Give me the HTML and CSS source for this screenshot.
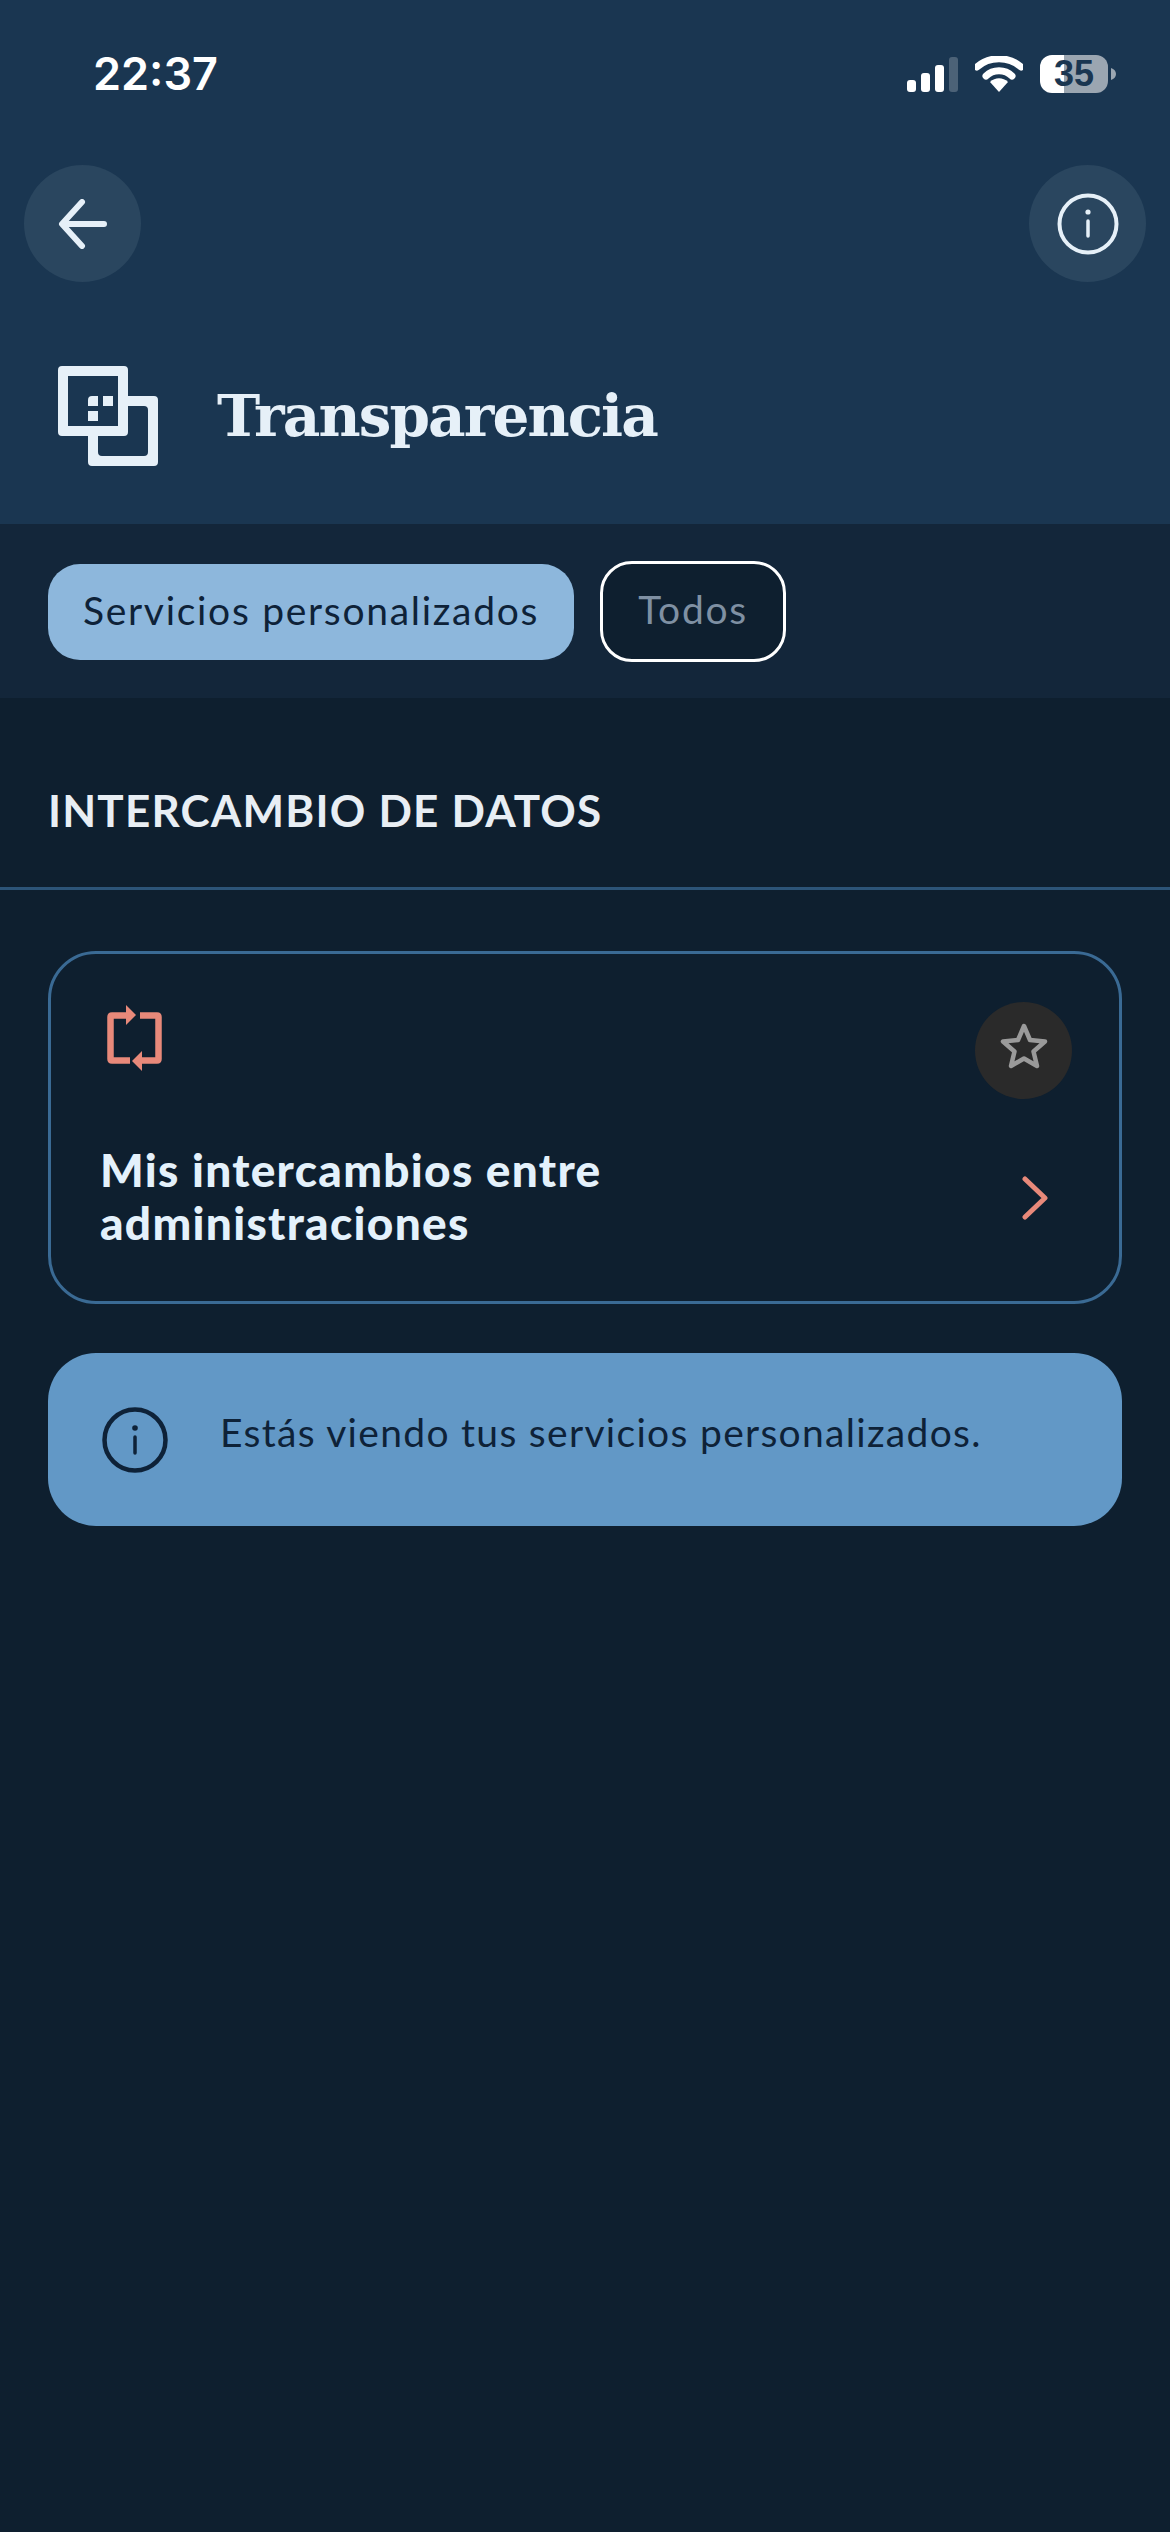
FILE: index.html
```html
<!DOCTYPE html>
<html lang="es">
<head>
    <meta charset="UTF-8">
    <title>Transparencia</title>
    <link rel="stylesheet" href="styles.css">
</head>
<body>
<div class="app">
    <header class="header">
        <div class="status-bar">
            <span class="time">22:37</span>
            <div class="status-icons">
                <svg class="signal" width="51" height="35" viewBox="0 0 51 35">
                    <rect x="0" y="23" width="9" height="12" rx="3" fill="#fff"/>
                    <rect x="14" y="16" width="9" height="19" rx="3" fill="#fff"/>
                    <rect x="28" y="8" width="9" height="27" rx="3" fill="#fff"/>
                    <rect x="42" y="0" width="9" height="35" rx="3" fill="#fff" fill-opacity="0.22"/>
                </svg>
                <svg class="wifi" width="48" height="36" viewBox="0 0 48 36">
                    <path d="M2 11 C14 0 34 0 46 11" fill="none" stroke="#fff" stroke-width="7" stroke-linecap="round"/>
                    <path d="M11 20 C18 13 30 13 37 20" fill="none" stroke="#fff" stroke-width="7" stroke-linecap="round"/>
                    <path d="M15 26 C20 21 28 21 33 26 L24 36 Z" fill="#fff"/>
                </svg>
                <div class="battery"><span class="battery-level">35</span></div>
                <svg class="battery-tip" width="5" height="12" viewBox="0 0 5 12">
                    <path d="M0 0 C3 1 5 3 5 6 C5 9 3 11 0 12 Z" fill="#9ba6b1"/>
                </svg>
            </div>
        </div>
        <nav class="nav">
            <button class="round-btn">
                <svg width="50" height="50" viewBox="0 0 50 50">
                    <path d="M46 25 H5 M24 3 L4 25 L24 47" fill="none" stroke="#e6f0f8" stroke-width="6" stroke-linecap="round" stroke-linejoin="round"/>
                </svg>
            </button>
            <button class="round-btn">
                <svg width="62" height="62" viewBox="0 0 62 62">
                    <circle cx="31" cy="31" r="28.5" fill="none" stroke="#e6f0f8" stroke-width="4"/>
                    <circle cx="31" cy="19" r="2.6" fill="#e6f0f8"/>
                    <path d="M31 28 V43" stroke="#e6f0f8" stroke-width="3.5" stroke-linecap="round"/>
                </svg>
            </button>
        </nav>
        <div class="title-row">
            <svg class="title-icon" width="100" height="100" viewBox="0 0 100 100">
                <path fill="#e6f0f8" fill-rule="evenodd" d="M34 30 H96 Q100 30 100 34 V96 Q100 100 96 100 H34 Q30 100 30 96 V70 H40 V86 Q40 90 44 90 H86 Q90 90 90 86 V44 Q90 40 86 40 H70 V30 Z"/>
                <path fill="#e6f0f8" fill-rule="evenodd" d="M4 0 H66 Q70 0 70 4 V66 Q70 70 66 70 H4 Q0 70 0 66 V4 Q0 0 4 0 Z M10 10 V60 H60 V10 Z"/>
                <path fill="#e6f0f8" d="M34 30 H40 V40 H30 V34 Q30 30 34 30 Z M45 30 H55 V40 H45 Z M30 45 H40 V55 H30 Z"/>
            </svg>
            <h1 class="title">Transparencia</h1>
        </div>
    </header>

    <div class="tabs">
        <button class="tab tab-active">Servicios personalizados</button>
        <button class="tab tab-outline">Todos</button>
    </div>

    <h2 class="section-title">INTERCAMBIO DE DATOS</h2>

    <main class="content">
        <section class="card">
            <div class="card-top">
                <svg class="exchange-icon" width="55" height="66" viewBox="0 0 55 66">
                    <path d="M20 10.500 H5 Q3.500 10.500 3.500 12 V54 Q3.500 55.500 5 55.500 H23" fill="none" stroke="#e8897a" stroke-width="6.500"/>
                    <path d="M33 10.500 H50 Q51.500 10.500 51.500 12 V54 Q51.500 55.500 50 55.500 H34" fill="none" stroke="#e8897a" stroke-width="6.500"/>
                    <path d="M19 0 L29 10 L19 20 Z" fill="#e8897a"/>
                    <path d="M35 46 L25 56 L35 66 Z" fill="#e8897a"/>
                </svg>
                <button class="star-btn">
                    <svg width="48" height="46" viewBox="0 0 48 46">
                        <path d="M24 3 L30 17 L45 18.500 L33.500 28.500 L37 43 L24 35.500 L11 43 L14.500 28.500 L3 18.500 L18 17 Z" fill="none" stroke="#9a9a9a" stroke-width="4.500" stroke-linejoin="round"/>
                    </svg>
                </button>
            </div>
            <div class="card-bottom">
                <h3 class="card-title">Mis intercambios entre<br>administraciones</h3>
                <svg class="chevron" width="26" height="44" viewBox="0 0 26 44">
                    <path d="M3 3 L23 22 L3 41" fill="none" stroke="#e8897a" stroke-width="5" stroke-linecap="round" stroke-linejoin="round"/>
                </svg>
            </div>
        </section>

        <section class="notice">
            <svg class="notice-icon" width="66" height="66" viewBox="0 0 66 66">
                <circle cx="33" cy="33" r="30.500" fill="none" stroke="#0e2238" stroke-width="4.500"/>
                <circle cx="33" cy="21" r="2.800" fill="#0e2238"/>
                <path d="M33 30 V46" stroke="#0e2238" stroke-width="3.500" stroke-linecap="round"/>
            </svg>
            <p class="notice-text">Estás viendo tus servicios personalizados.</p>
        </section>
    </main>
</div>
</body>
</html>
```

FILE: styles.css
```css
* {
    box-sizing: border-box;
}

body {
    margin: 0;
    background-color: #0e1f2f;
    font-family: Lato, sans-serif;
}

button {
    font-family: inherit;
    border: none;
    padding: 0;
}

.app {
    width: 1170px;
    height: 2532px;
    overflow: hidden;
}

.header {
    height: 524px;
    padding: 17px 24px 0;
    background-color: #1a3651;
}

.status-bar {
    height: 148px;
    padding: 20px 30px 0 69px;
    display: flex;
    justify-content: space-between;
    align-items: flex-start;
}

.time {
    font-family: Inter, sans-serif;
    font-size: 45px;
    font-weight: 600;
    line-height: 74px;
    color: #fff;
}

.status-icons {
    display: flex;
    align-items: center;
    margin-top: 18px;
}

.wifi {
    margin-left: 17px;
}

.battery {
    width: 68px;
    height: 38px;
    margin-left: 17px;
    border-radius: 12px;
    background: linear-gradient(to right, #fff 35%, #9ba6b1 35%);
    display: flex;
    justify-content: center;
    align-items: center;
}

.battery-level {
    font-family: "Liberation Sans", sans-serif;
    font-size: 36px;
    font-weight: 700;
    color: #1a3651;
}

.battery-tip {
    margin-left: 3px;
}

.nav {
    display: flex;
    justify-content: space-between;
}

.round-btn {
    width: 117px;
    height: 117px;
    border-radius: 50%;
    background-color: #2a465f;
    display: flex;
    justify-content: center;
    align-items: center;
}

.title-row {
    margin-top: 84px;
    padding-left: 34px;
    display: flex;
    align-items: center;
    gap: 59px;
}

.title {
    margin: 0;
    font-family: "DejaVu Serif", serif;
    font-size: 58px;
    font-weight: 700;
    letter-spacing: -1.9px;
    color: #e6f0f8;
}

.tabs {
    height: 174px;
    padding: 37px 0 0 48px;
    background-color: #13263a;
    display: flex;
    align-items: flex-start;
    gap: 26px;
}

.tab {
    padding-bottom: 5px;
    border-radius: 32px;
    font-size: 39px;
    letter-spacing: 1.7px;
}

.tab-active {
    width: 526px;
    height: 96px;
    margin-top: 3px;
    background-color: #8db7dc;
    color: #0e2238;
}

.tab-outline {
    width: 186px;
    height: 101px;
    border: 3px solid #fff;
    background-color: #0e1f2f;
    color: #7f90a3;
}

.section-title {
    margin: 0;
    padding: 88px 48px 53px;
    border-bottom: 3px solid #2c5478;
    font-size: 44px;
    line-height: 48px;
    font-weight: 700;
    letter-spacing: 1.2px;
    color: #e8eef4;
}

.content {
    padding: 61px 48px 0;
}

.card {
    height: 353px;
    padding: 48px 47px 0 49px;
    border: 3px solid #3a6a94;
    border-radius: 48px;
}

.card-top {
    display: flex;
    justify-content: space-between;
    align-items: flex-start;
}

.exchange-icon {
    margin: 3px 0 0 7px;
}

.star-btn {
    width: 97px;
    height: 97px;
    padding-bottom: 10px;
    border-radius: 50%;
    background-color: #2a2a2a;
    display: flex;
    justify-content: center;
    align-items: center;
}

.card-bottom {
    margin-top: 44px;
    display: flex;
    justify-content: space-between;
    align-items: center;
}

.card-title {
    margin: 0;
    font-size: 46px;
    line-height: 53px;
    font-weight: 900;
    letter-spacing: 1.3px;
    color: #e4f1fb;
}

.chevron {
    margin: 4px 24px 0 0;
}

.notice {
    margin-top: 49px;
    height: 173px;
    padding: 54px 54px 0;
    border-radius: 48px;
    background-color: #6298c6;
    display: flex;
    align-items: flex-start;
    gap: 52px;
}

.notice-text {
    margin: 0;
    font-size: 39px;
    line-height: 50px;
    letter-spacing: 1.3px;
    color: #0e2238;
}
```
